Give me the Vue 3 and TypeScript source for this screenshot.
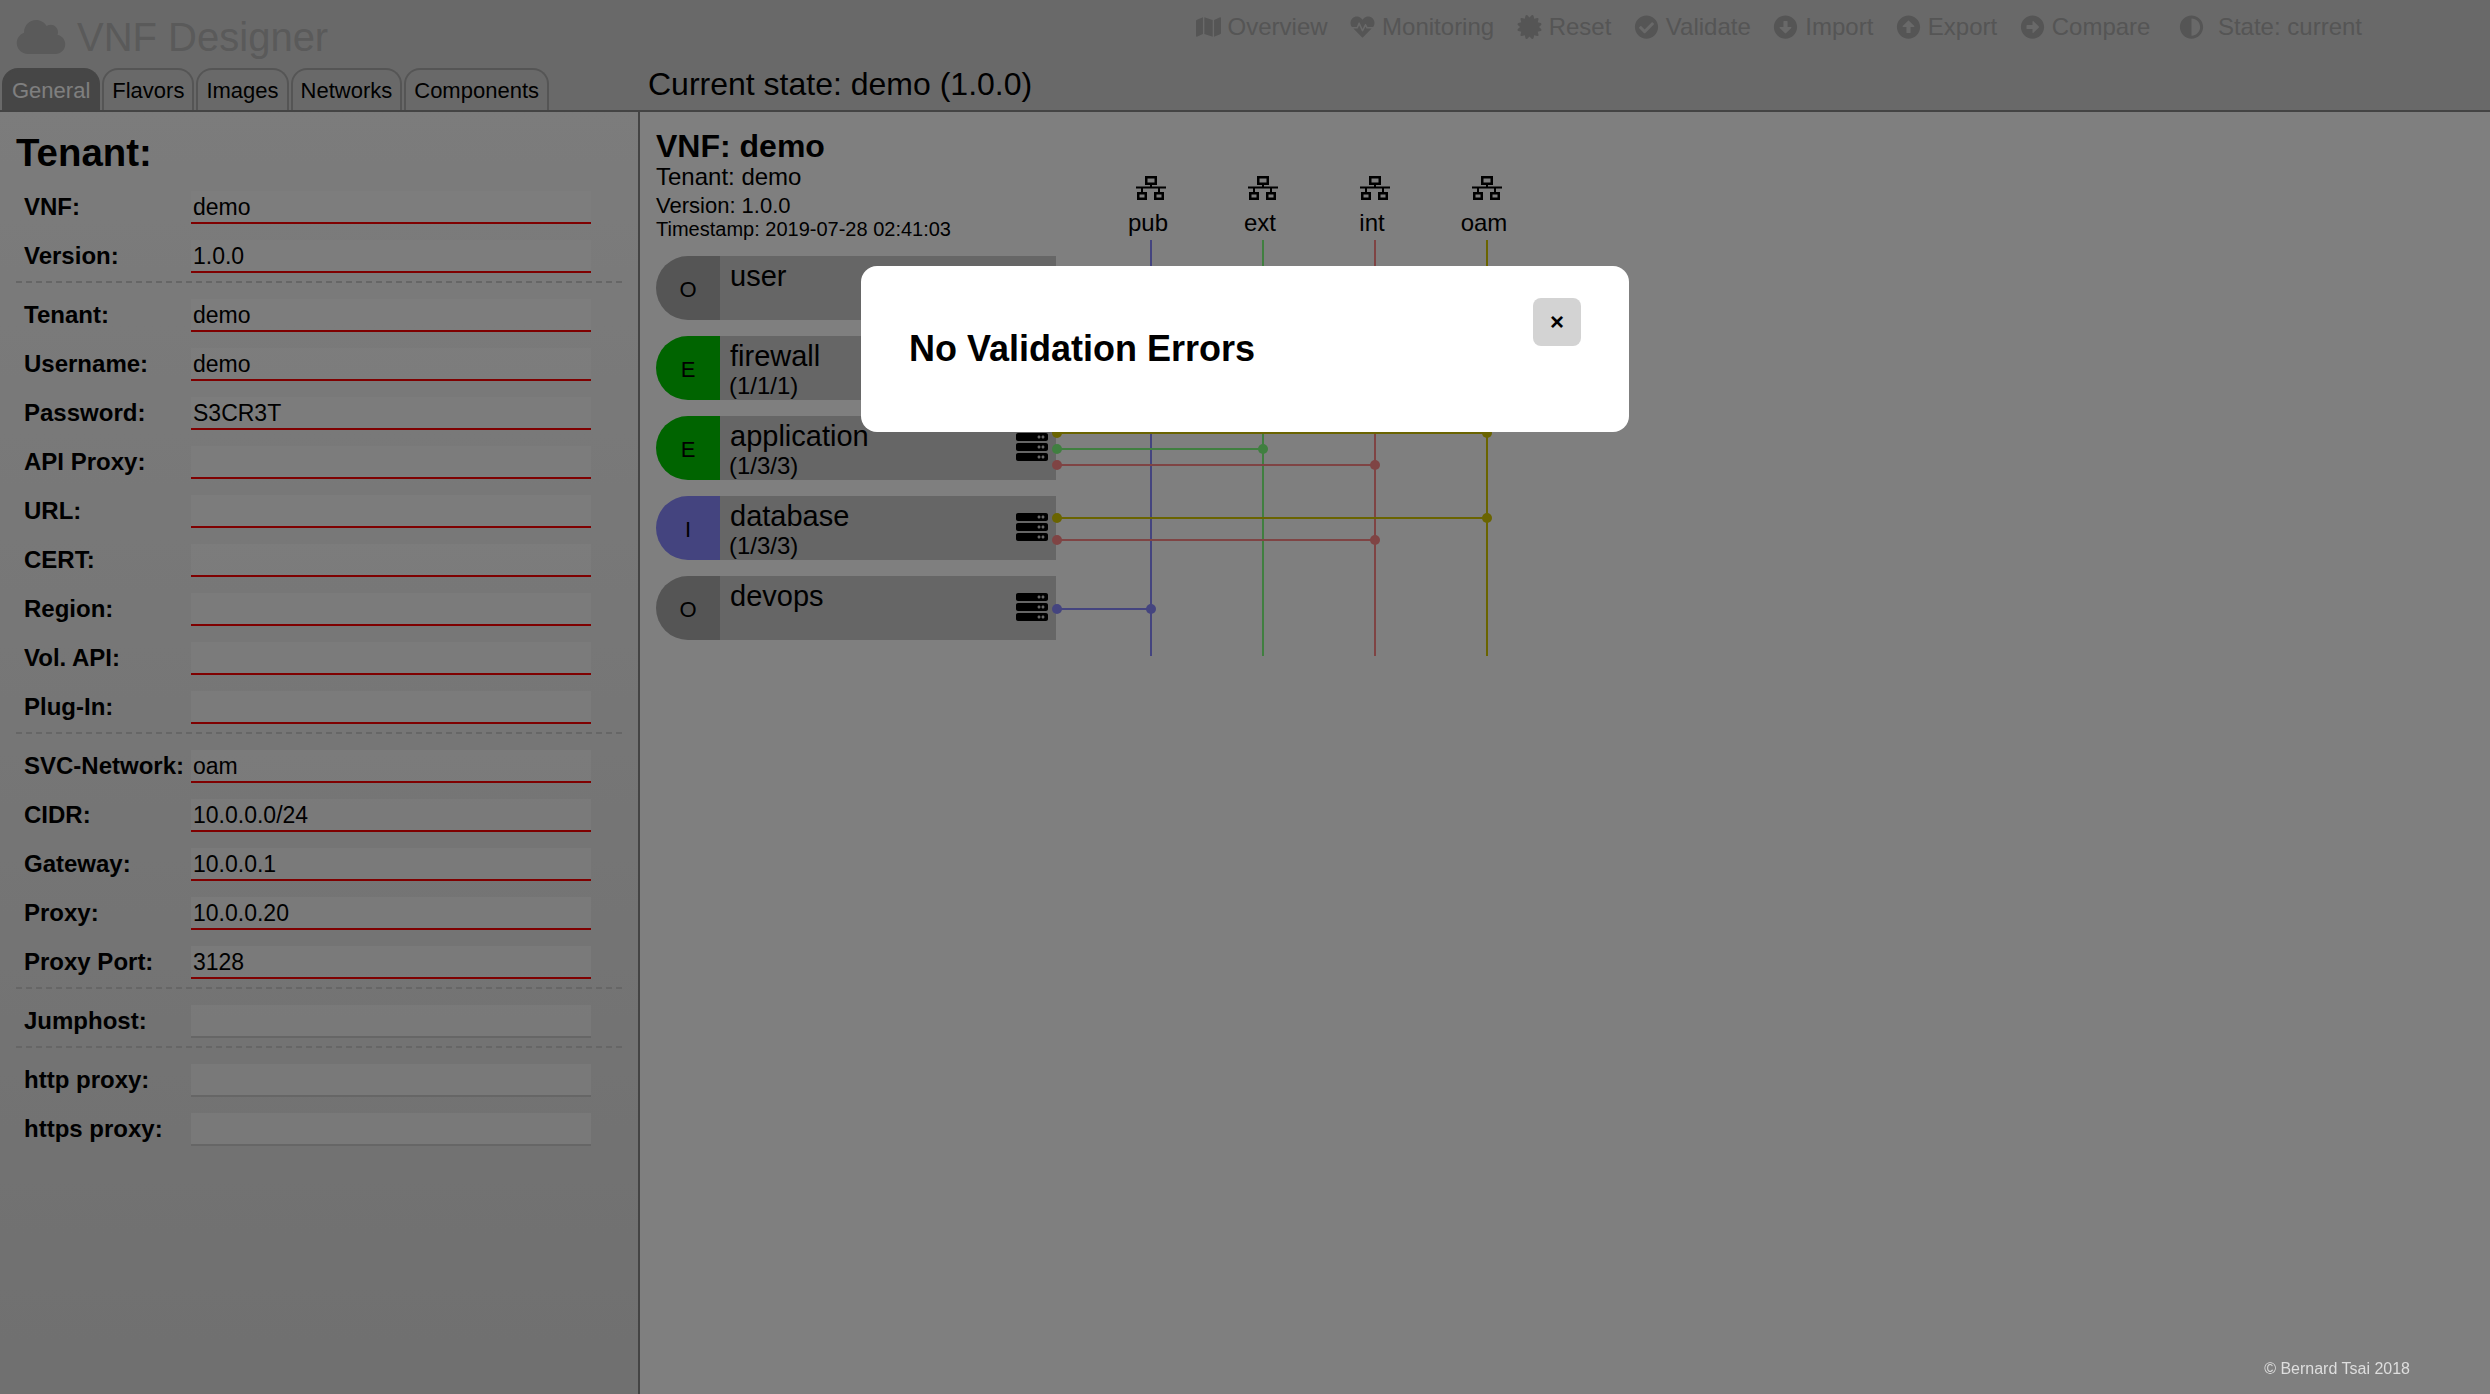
<script setup lang="ts">
type Field = { label: string; value?: string; required?: boolean }
type Wire = { y: number; net: number }

const formGroups: Field[][] = [
  [
    { label: 'VNF:', value: 'demo', required: true },
    { label: 'Version:', value: '1.0.0', required: true },
  ],
  [
    { label: 'Tenant:', value: 'demo', required: true },
    { label: 'Username:', value: 'demo', required: true },
    { label: 'Password:', value: 'S3CR3T', required: true },
    { label: 'API Proxy:', required: true },
    { label: 'URL:', required: true },
    { label: 'CERT:', required: true },
    { label: 'Region:', required: true },
    { label: 'Vol. API:', required: true },
    { label: 'Plug-In:', required: true },
  ],
  [
    { label: 'SVC-Network:', value: 'oam', required: true },
    { label: 'CIDR:', value: '10.0.0.0/24', required: true },
    { label: 'Gateway:', value: '10.0.0.1', required: true },
    { label: 'Proxy:', value: '10.0.0.20', required: true },
    { label: 'Proxy Port:', value: '3128', required: true },
  ],
  [{ label: 'Jumphost:' }],
  [{ label: 'http proxy:' }, { label: 'https proxy:' }],
]

const tabs = ['General', 'Flavors', 'Images', 'Networks', 'Components']

const navIcons: Record<string, { box: string; d: string }> = {
  map: {
    box: '0 0 576 512',
    d: 'M0 117.66v346.32c0 11.32 11.43 19.06 21.94 14.86L160 416V32L20.12 87.95A32.006 32.006 0 0 0 0 117.66zM192 416l192 64V96L192 32v384zM554.06 33.16L416 96v384l139.88-55.95A31.996 31.996 0 0 0 576 394.34V48.02c0-11.32-11.43-19.06-21.94-14.86z',
  },
  heart: {
    box: '0 0 512 512',
    d: 'M320.2 243.8l-49.7 99.4c-6 12.1-23.4 11.7-28.9-.6l-56.9-126.3-30 71.7H60.6l182.5 186.5c7.1 7.3 18.6 7.3 25.7 0L451.4 288H342.3l-22.1-44.2zM473.7 73.9l-2.4-2.5c-51.5-52.6-135.8-52.6-187.4 0L256 100l-27.9-28.5c-51.5-52.7-135.9-52.7-187.4 0l-2.4 2.4C-10.4 123.7-12.5 203 31 256h102.4l35.9-86.2c5.4-12.9 23.6-13.2 29.4-.4l58.2 129.3 49-97.9c5.9-11.8 22.7-11.8 28.6 0l27.6 55.2H481c43.5-53 41.4-132.3-7.3-182.1z',
  },
  cert: {
    box: '0 0 512 512',
    d: 'M458.622 255.92l45.985-45.005c13.708-12.977 7.316-36.039-10.664-40.339l-62.65-15.99 17.661-62.015c4.991-17.838-11.829-34.663-29.661-29.671l-61.994 17.667-15.984-62.671C337.085.197 313.765-6.276 300.99 7.228L256 53.57 211.011 7.229c-12.63-13.351-36.047-7.234-40.325 10.668l-15.984 62.671-61.995-17.667C74.87 57.907 58.056 74.738 63.046 92.572l17.661 62.015-62.65 15.99C.069 174.878-6.31 197.944 7.392 210.915l45.985 45.005-45.985 45.004c-13.708 12.977-7.316 36.039 10.664 40.339l62.65 15.99-17.661 62.015c-4.991 17.838 11.829 34.663 29.661 29.671l61.994-17.667 15.984 62.671c4.439 18.575 27.696 24.018 40.325 10.668L256 458.61l44.989 46.001c12.5 13.488 35.987 7.486 40.325-10.668l15.984-62.671 61.994 17.667c17.836 4.994 34.651-11.837 29.661-29.671l-17.661-62.015 62.65-15.99c17.987-4.302 24.366-27.367 10.664-40.339l-45.984-45.004z',
  },
  check: {
    box: '0 0 512 512',
    d: 'M504 256c0 136.967-111.033 248-248 248S8 392.967 8 256 119.033 8 256 8s248 111.033 248 248zM227.314 387.314l184-184c6.248-6.248 6.248-16.379 0-22.627l-22.627-22.627c-6.248-6.249-16.379-6.249-22.628 0L216 308.118l-70.059-70.059c-6.248-6.248-16.379-6.248-22.628 0l-22.627 22.627c-6.248 6.248-6.248 16.379 0 22.627l104 104c6.249 6.249 16.379 6.249 22.628.001z',
  },
  down: {
    box: '0 0 512 512',
    d: 'M504 256c0 137-111 248-248 248S8 393 8 256 119 8 256 8s248 111 248 248zM212 140v116h-70.9c-10.7 0-16.1 13-8.5 20.5l114.9 114.3c4.7 4.7 12.2 4.7 16.9 0l114.9-114.3c7.6-7.6 2.2-20.5-8.5-20.5H300V140c0-6.6-5.4-12-12-12h-64c-6.6 0-12 5.4-12 12z',
  },
  up: {
    box: '0 0 512 512',
    d: 'M8 256C8 119 119 8 256 8s248 111 248 248-111 248-248 248S8 393 8 256zm292 116V256h70.9c10.7 0 16.1-13 8.5-20.5L264.5 121.2c-4.7-4.7-12.2-4.7-16.9 0l-115 114.3c-7.6 7.6-2.2 20.5 8.5 20.5H212v116c0 6.6 5.4 12 12 12h64c6.6 0 12-5.4 12-12z',
  },
  right: {
    box: '0 0 512 512',
    d: 'M256 8c137 0 248 111 248 248S393 504 256 504 8 393 8 256 119 8 256 8zM140 300h116v70.9c0 10.7 13 16.1 20.5 8.5l114.3-114.9c4.7-4.7 4.7-12.2 0-16.9l-114.3-115c-7.6-7.6-20.5-2.2-20.5 8.5V212H140c-6.6 0-12 5.4-12 12v64c0 6.6 5.4 12 12 12z',
  },
  adjust: {
    box: '0 0 512 512',
    d: 'M8 256c0 136.966 111.033 248 248 248s248-111.034 248-248S392.966 8 256 8 8 119.033 8 256zm248 184V72c101.705 0 184 82.311 184 184 0 101.705-82.311 184-184 184z',
  },
}

const navItems = [
  { label: 'Overview', icon: 'map' },
  { label: 'Monitoring', icon: 'heart' },
  { label: 'Reset', icon: 'cert' },
  { label: 'Validate', icon: 'check' },
  { label: 'Import', icon: 'down' },
  { label: 'Export', icon: 'up' },
  { label: 'Compare', icon: 'right' },
]

const serverPath =
  'M480 160H32c-17.673 0-32-14.327-32-32V64c0-17.673 14.327-32 32-32h448c17.673 0 32 14.327 32 32v64c0 17.673-14.327 32-32 32zm-48-88c-13.255 0-24 10.745-24 24s10.745 24 24 24 24-10.745 24-24-10.745-24-24-24zm-64 0c-13.255 0-24 10.745-24 24s10.745 24 24 24 24-10.745 24-24-10.745-24-24-24zm112 248H32c-17.673 0-32-14.327-32-32v-64c0-17.673 14.327-32 32-32h448c17.673 0 32 14.327 32 32v64c0 17.673-14.327 32-32 32zm-48-88c-13.255 0-24 10.745-24 24s10.745 24 24 24 24-10.745 24-24-10.745-24-24-24zm-64 0c-13.255 0-24 10.745-24 24s10.745 24 24 24 24-10.745 24-24-10.745-24-24-24zm112 248H32c-17.673 0-32-14.327-32-32v-64c0-17.673 14.327-32 32-32h448c17.673 0 32 14.327 32 32v64c0 17.673-14.327 32-32 32zm-48-88c-13.255 0-24 10.745-24 24s10.745 24 24 24 24-10.745 24-24-10.745-24-24-24zm-64 0c-13.255 0-24 10.745-24 24s10.745 24 24 24 24-10.745 24-24-10.745-24-24-24z'

const components = [
  { name: 'user', kind: 'O', counts: '' },
  { name: 'firewall', kind: 'E', counts: '(1/1/1)' },
  { name: 'application', kind: 'E', counts: '(1/3/3)' },
  { name: 'database', kind: 'I', counts: '(1/3/3)' },
  { name: 'devops', kind: 'O', counts: '' },
]

// x is relative to the diagram canvas, which starts at the rows' left edge
const networks = [
  { name: 'pub', x: 495, color: '#8888ff' },
  { name: 'ext', x: 607, color: '#80ff80' },
  { name: 'int', x: 719, color: '#ff8888' },
  { name: 'oam', x: 831, color: '#d4c800' },
]

// y is relative to the top of the wiring svg
const wires: Wire[] = [
  { y: 193, net: 3 },
  { y: 209, net: 1 },
  { y: 225, net: 2 },
  { y: 278, net: 3 },
  { y: 300, net: 2 },
  { y: 369, net: 0 },
]
</script>

<template>
  <div class="page">
    <header class="header">
      <div class="topBar">
        <div class="brand">
          <svg class="brandIcon" viewBox="0 0 640 448">
            <path
              d="M537.6 194.6c4.1-10.7 6.4-22.4 6.4-34.6 0-53-43-96-96-96-19.7 0-38.1 6-53.3 16.2C367 32.2 315.3 0 256 0 167.6 0 96 71.6 96 160c0 2.7.1 5.4.2 8.1C40.2 187.8 0 241.2 0 304c0 79.5 64.5 144 144 144h368c70.7 0 128-57.3 128-128 0-61.9-44-113.6-102.4-125.4z"
            />
          </svg>
          <span>VNF Designer</span>
        </div>
        <nav class="nav">
          <a v-for="item in navItems" :key="item.label" class="navItem">
            <svg class="navIcon" :viewBox="navIcons[item.icon].box"><path :d="navIcons[item.icon].d" /></svg>
            {{ item.label }}
          </a>
          <a class="navItem stateItem">
            <svg class="navIcon" :viewBox="navIcons.adjust.box"><path :d="navIcons.adjust.d" /></svg>
            State: current
          </a>
        </nav>
      </div>
      <div class="tabBar">
        <div class="tabs">
          <button v-for="(tab, index) in tabs" :key="tab" :class="{ tab: true, active: index === 0 }">
            {{ tab }}
          </button>
        </div>
        <div class="currentState">Current state: demo (1.0.0)</div>
      </div>
    </header>

    <div class="content">
      <aside class="sidePane">
        <h2 class="paneTitle">Tenant:</h2>
        <div v-for="(group, groupIndex) in formGroups" :key="groupIndex" class="formGroup">
          <div v-for="field in group" :key="field.label" class="formRow">
            <label>{{ field.label }}</label>
            <div :class="{ fieldInput: true, required: field.required }">{{ field.value }}</div>
          </div>
        </div>
      </aside>

      <main class="mainPane">
        <h2 class="vnfTitle">VNF: demo</h2>
        <div class="metaTenant">Tenant: demo</div>
        <div class="metaVersion">Version: 1.0.0</div>
        <div class="metaTime">Timestamp: 2019-07-28 02:41:03</div>

        <div class="diagram">
          <div
            v-for="net in networks"
            :key="net.name"
            class="netHead"
            :style="{ left: net.x + 'px' }"
          >
            <svg class="netIcon" viewBox="0 0 30 24">
              <g fill="none" stroke="#000">
                <rect x="10.25" y="1.25" width="9.5" height="6.5" stroke-width="2.5" />
                <rect x="2.25" y="17.25" width="7.5" height="5.5" stroke-width="2.5" />
                <rect x="19.25" y="17.25" width="7.5" height="5.5" stroke-width="2.5" />
                <path d="M15 9v3M0 11.5h30M6 12v4M23 12v4" stroke-width="2" />
              </g>
            </svg>
            <span class="netName">{{ net.name }}</span>
          </div>

          <div class="componentList">
            <div v-for="comp in components" :key="comp.name" class="component">
              <div :class="['kind', 'kind' + comp.kind]">{{ comp.kind }}</div>
              <div class="compBody">
                <div class="compName">{{ comp.name }}</div>
                <div class="compCounts">{{ comp.counts }}</div>
                <svg class="serverIcon" viewBox="0 0 512 512"><path :d="serverPath" /></svg>
              </div>
            </div>
          </div>

          <svg class="wiring" width="900" height="416" viewBox="0 0 900 416">
            <line
              v-for="net in networks"
              :key="net.name"
              :x1="net.x"
              y1="0"
              :x2="net.x"
              y2="416"
              :stroke="net.color"
              stroke-width="2"
            />
            <g v-for="wire in wires" :key="wire.y" :fill="networks[wire.net].color">
              <line
                x1="401"
                :y1="wire.y"
                :x2="networks[wire.net].x"
                :y2="wire.y"
                :stroke="networks[wire.net].color"
                stroke-width="2"
              />
              <circle cx="401" :cy="wire.y" r="5" />
              <circle :cx="networks[wire.net].x" :cy="wire.y" r="5" />
            </g>
          </svg>
        </div>
      </main>
    </div>

    <div class="overlay">
      <div class="modal">
        <h2 class="modalTitle">No Validation Errors</h2>
        <button class="modalClose">×</button>
      </div>
    </div>

    <footer class="footer">© Bernard Tsai 2018</footer>
  </div>
</template>

<style>
html,
body {
  margin: 0;
  background: #fff;
}
</style>

<style scoped>
.page {
  width: 2490px;
  height: 1394px;
  overflow: hidden;
  display: flex;
  flex-direction: column;
  font-family: 'Liberation Sans', Arial, sans-serif;
  color: #000;
  background: #fff;
}

.header {
  height: 112px;
  box-sizing: border-box;
  flex: none;
  background: #d3d3d3;
  border-bottom: 2px solid #888;
  display: flex;
  flex-direction: column;
}

.topBar {
  height: 68px;
  flex: none;
  display: flex;
  align-items: flex-start;
  justify-content: space-between;
}

.brand {
  display: flex;
  align-items: center;
  gap: 11px;
  margin: 14px 0 0 16px;
  font-size: 40px;
  line-height: 46px;
  color: #b4b4b4;
}

.brandIcon {
  width: 50px;
  height: 34px;
  fill: #b4b4b4;
}

.nav {
  display: flex;
  gap: 22.5px;
  margin: 13px 128px 0 0;
  font-size: 24px;
  line-height: 28px;
  color: #aaa;
}

.navItem {
  display: flex;
  align-items: center;
  gap: 7px;
}

.stateItem {
  margin-left: 6px;
  gap: 14px;
}

.navIcon {
  width: 25px;
  height: 24px;
  fill: #aaa;
}

.tabBar {
  display: flex;
  flex: 1;
}

.tabs {
  display: flex;
  gap: 2px;
  padding-left: 2px;
  width: 641px;
  box-sizing: border-box;
}

.tab {
  height: 42px;
  box-sizing: border-box;
  padding: 2px 8px 0;
  border: 2px solid #aaa;
  border-bottom: none;
  border-radius: 16px 16px 0 0;
  background: #d3d3d3;
  font-family: inherit;
  font-size: 22px;
  color: #000;
}

.tab.active {
  background: #8c8c8c;
  border-color: #8c8c8c;
  color: #fff;
}

.currentState {
  font-size: 32px;
  line-height: 36px;
  margin: -2px 0 0 7px;
}

.content {
  flex: 1;
  display: flex;
  min-height: 0;
}

.sidePane {
  width: 640px;
  flex: none;
  box-sizing: border-box;
  border-right: 2px solid #888;
  padding: 0 16px;
  background: linear-gradient(#f8f8f8, #e0e0e0);
}

.paneTitle {
  margin: 0;
  padding-top: 19px;
  height: 79px;
  box-sizing: border-box;
  font-size: 38.4px;
  line-height: 44px;
}

.formGroup {
  padding: 0 0 8px;
  margin-bottom: 16px;
  border-bottom: 2px dashed #ccc;
}

.formGroup:last-child {
  border-bottom: none;
}

.formRow {
  display: flex;
  align-items: center;
  height: 33px;
  margin-bottom: 16px;
}

.formRow:last-child {
  margin-bottom: 0;
}

.formRow label {
  width: 175px;
  padding: 0 0 2px 8px;
  box-sizing: border-box;
  font-size: 24px;
  font-weight: bold;
  white-space: nowrap;
  flex: none;
}

.fieldInput {
  width: 400px;
  height: 33px;
  box-sizing: border-box;
  padding-left: 2px;
  font-size: 23px;
  line-height: 32px;
  background: rgba(255, 255, 255, 0.5);
  border-bottom: 2px solid #ccc;
}

.fieldInput.required {
  border-bottom-color: #ff0000;
}

.mainPane {
  flex: 1;
  padding: 16px 0 0 16px;
  min-width: 0;
}

.vnfTitle {
  margin: 0 0 -2px;
  font-size: 32px;
  line-height: 37px;
}

.metaTenant {
  font-size: 24px;
  line-height: 28px;
}

.metaVersion {
  font-size: 22px;
  line-height: 25px;
  margin-top: 2px;
}

.metaTime {
  font-size: 20px;
  line-height: 23px;
}

.diagram {
  position: relative;
  margin-top: 15px;
  width: 900px;
}

.netHead {
  position: absolute;
  top: -80px;
  width: 80px;
  margin-left: -40px;
  display: flex;
  flex-direction: column;
  align-items: center;
  text-align: center;
}

.netIcon {
  width: 30px;
  height: 24px;
}

.netName {
  font-size: 24px;
  line-height: 28px;
  margin: 9px 6px 0 0;
}

.wiring {
  position: absolute;
  left: 0;
  top: -16px;
}

.componentList {
  display: flex;
  flex-direction: column;
  gap: 16px;
  width: 400px;
}

.component {
  display: flex;
  height: 64px;
}

.kind {
  width: 64px;
  flex: none;
  box-sizing: border-box;
  border-radius: 32px 0 0 32px;
  display: flex;
  align-items: center;
  justify-content: center;
  font-size: 22px;
  padding-top: 3px;
}

.kindO {
  background: #aaa;
}

.kindE {
  background: #00c800;
}

.kindI {
  background: #8888ff;
}

.compBody {
  position: relative;
  flex: 1;
  background: #ccc;
  padding-left: 10px;
}

.compName {
  font-size: 29px;
  line-height: 32px;
  margin-top: 4px;
}

.compCounts {
  font-size: 24px;
  line-height: 28px;
  margin-left: -1px;
}

.serverIcon {
  position: absolute;
  right: 8px;
  top: 15px;
  width: 32px;
  height: 32px;
  fill: #000;
}

.overlay {
  position: fixed;
  inset: 0;
  z-index: 10;
  background: rgba(0, 0, 0, 0.5);
}

.modal {
  position: relative;
  width: 768px;
  height: 166px;
  margin: 266px auto 0;
  box-sizing: border-box;
  padding: 62px 48px 0;
  background: #fff;
  border-radius: 16px;
}

.modalTitle {
  margin: 0;
  font-size: 36px;
  line-height: 41px;
}

.modalClose {
  position: absolute;
  top: 32px;
  right: 48px;
  width: 48px;
  height: 48px;
  padding: 0;
  border: none;
  border-radius: 8px;
  background: #d3d3d3;
  font-family: inherit;
  font-size: 24px;
  font-weight: bold;
  color: #000;
}

.footer {
  position: fixed;
  right: 80px;
  bottom: 16px;
  z-index: 20;
  font-size: 16px;
  line-height: 18px;
  color: #dedede;
}
</style>
